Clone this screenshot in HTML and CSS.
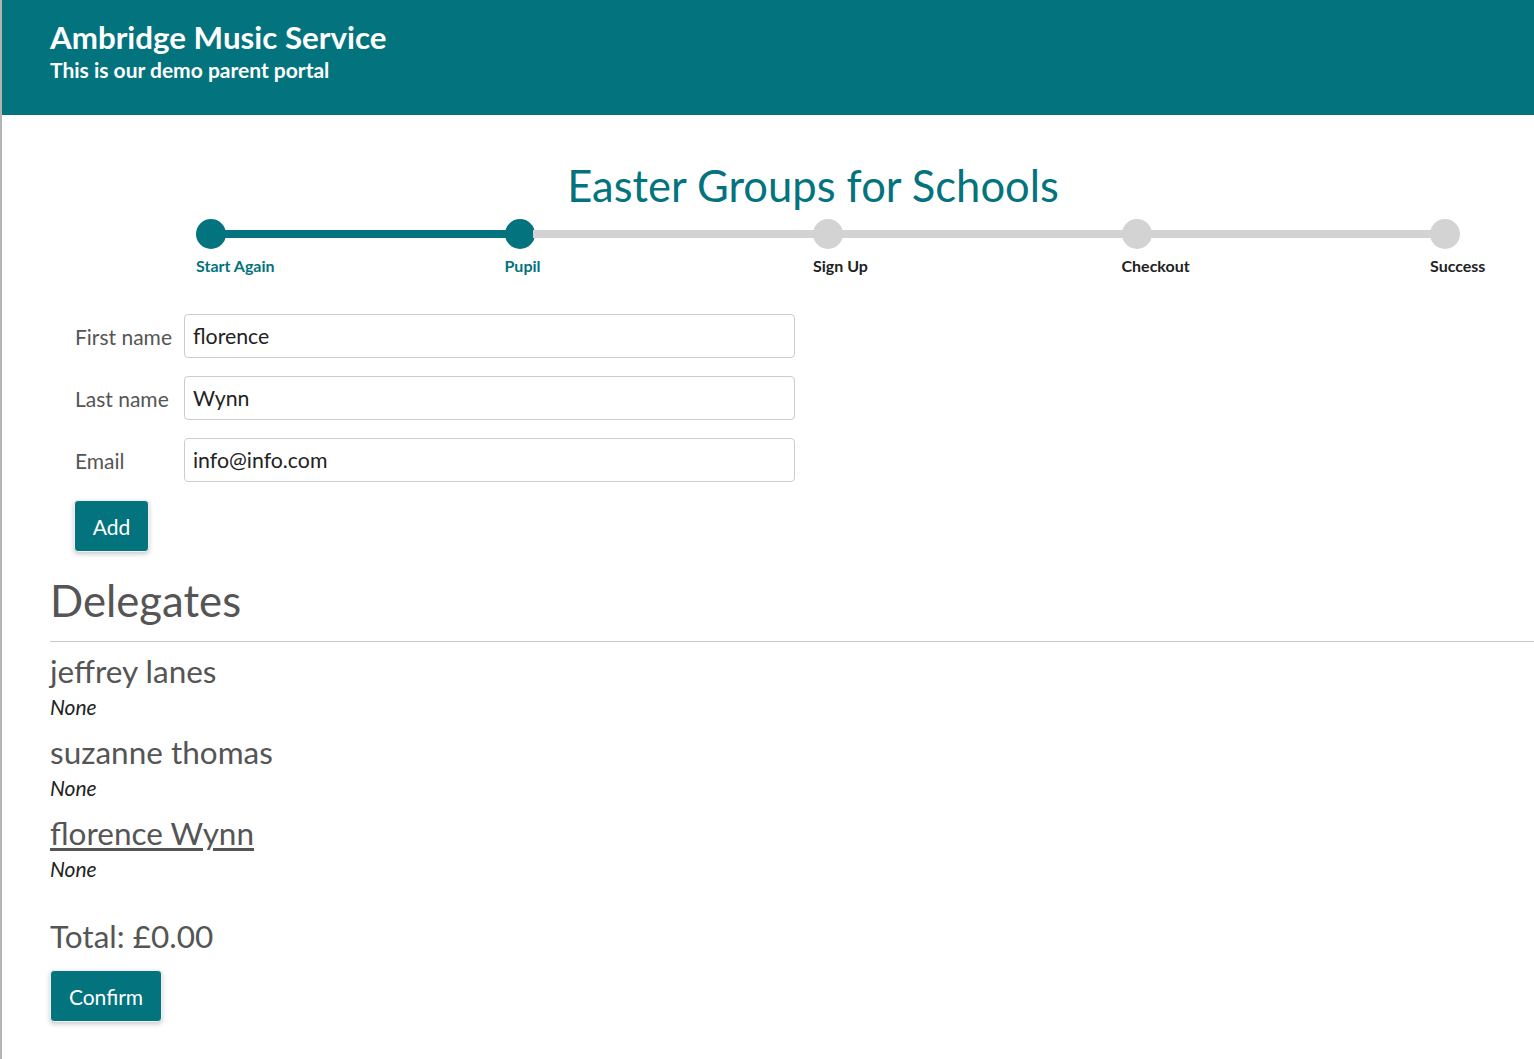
FILE: index.html
```html
<!DOCTYPE html>
<html lang="en">
<head>
<meta charset="utf-8">
<title>Ambridge Music Service</title>
<link rel="stylesheet" href="styles.css">
</head>
<body>
<div class="page">
  <header class="site-header">
    <div class="brand">Ambridge Music Service</div>
    <div class="tagline">This is our demo parent portal</div>
  </header>
  <main class="content">
    <h1 class="event-title">Easter Groups for Schools</h1>
    <div class="stepper">
      <div class="step done"><div class="track"><span class="dot"></span><span class="bar"></span></div><span class="step-label">Start Again</span></div>
      <div class="step current"><div class="track"><span class="dot"></span><span class="bar"></span></div><span class="step-label">Pupil</span></div>
      <div class="step"><div class="track"><span class="dot"></span><span class="bar"></span></div><span class="step-label">Sign Up</span></div>
      <div class="step"><div class="track"><span class="dot"></span><span class="bar"></span></div><span class="step-label">Checkout</span></div>
      <div class="step last"><div class="track"><span class="dot"></span></div><span class="step-label">Success</span></div>
    </div>

    <form class="pupil-form">
      <div class="form-row"><label class="form-label">First name</label><input class="form-input" type="text" value="florence"></div>
      <div class="form-row"><label class="form-label">Last name</label><input class="form-input" type="text" value="Wynn"></div>
      <div class="form-row"><label class="form-label">Email</label><input class="form-input" type="text" value="info@info.com"></div>
      <button type="button" class="btn add-btn">Add</button>
    </form>

    <section class="delegates">
      <h2 class="section-title">Delegates</h2>
      <div class="rule"></div>
      <div class="delegate"><div class="delegate-name">jeffrey lanes</div><div class="delegate-note">None</div></div>
      <div class="delegate"><div class="delegate-name">suzanne thomas</div><div class="delegate-note">None</div></div>
      <div class="delegate"><a class="delegate-name link" href="#">florence Wynn</a><div class="delegate-note">None</div></div>
    </section>

    <div class="total">Total: £0.00</div>
    <button type="button" class="btn confirm-btn">Confirm</button>
  </main>
</div>
</body>
</html>
```

FILE: styles.css
```css
html, body {
  margin: 0;
  padding: 0;
  background: #fff;
}
body {
  font-family: Lato, "Open Sans", sans-serif;
  color: #555;
}
.page {
  border-left: 2px solid #b4b4b4;
  min-height: 1059px;
  box-sizing: border-box;
}
.site-header {
  background: #03737e;
  height: 115px;
  box-sizing: border-box;
  padding: 19px 0 0 48px;
  color: #fff;
}
.brand {
  font-size: 31.3px;
  font-weight: 700;
  line-height: 36px;
}
.tagline {
  font-size: 21px;
  font-weight: 700;
  line-height: 30px;
}
.content {
  padding: 0 0 0 48px;
}
.event-title {
  margin: 0 -42px 0 0;
  padding-top: 43px;
  font-size: 43.5px;
  font-weight: 400;
  line-height: 54px;
  color: #03737e;
  text-align: center;
}
.stepper {
  display: flex;
  margin: 7px 0 0 146px;
}
.step {
  width: 308.5px;
  display: flex;
  flex-direction: column;
}
.step.last {
  width: 60px;
}
.track {
  display: flex;
  align-items: center;
  height: 30px;
}
.dot {
  width: 30px;
  height: 30px;
  border-radius: 50%;
  background: #d3d3d3;
  flex: none;
}
.bar {
  flex: 1;
  height: 8px;
  background: #d3d3d3;
  margin: 0 -2px;
}
.done .dot, .current .dot, .done .bar {
  background: #03737e;
}
.step-label {
  font-size: 16px;
  font-weight: 700;
  color: #222;
  margin-top: 8px;
  line-height: 18px;
  white-space: nowrap;
}
.done .step-label, .current .step-label {
  color: #03737e;
}
.pupil-form {
  margin: 39px 0 0 25px;
  display: flex;
  flex-direction: column;
  gap: 18px;
  align-items: flex-start;
}
.form-row {
  display: flex;
  align-items: center;
}
.form-label {
  width: 109px;
  font-size: 21px;
  color: #555;
}
.form-input {
  width: 611px;
  height: 44px;
  box-sizing: border-box;
  border: 1px solid #ccc;
  border-radius: 4px;
  padding: 0 8px;
  font-family: Lato, "Open Sans", sans-serif;
  font-size: 21.3px;
  color: #222;
  background: #fff;
}
.btn {
  background: #03737e;
  color: #fff;
  border: 1px solid #f0f0f0;
  border-radius: 4px;
  font-family: Lato, "Open Sans", sans-serif;
  font-size: 21px;
  height: 52px;
  padding: 0 17px;
  box-shadow: 0 2px 5px rgba(0,0,0,0.22);
  cursor: pointer;
}
.add-btn {
  width: 75px;
  padding: 0;
  margin-top: 0;
  margin-left: -1px;
}
.delegates {
  margin-top: 23px;
}
.section-title {
  margin: 0;
  font-size: 43.7px;
  font-weight: 400;
  line-height: 50px;
  color: #555;
}
.rule {
  height: 1px;
  background: #c8c8c8;
  margin-top: 16px;
  margin-right: -2px;
}
.delegate {
  display: flex;
  flex-direction: column;
  align-items: flex-start;
  height: 81px;
}
.delegate-name {
  font-size: 31.5px;
  line-height: 40px;
  margin-top: 9px;
  color: #555;
}
.delegate-name.link {
  color: #555;
  text-decoration: underline;
  text-underline-offset: 3px;
}
.delegate-note {
  font-size: 21px;
  font-style: italic;
  color: #222;
  line-height: 24px;
  margin-top: 4px;
}
.total {
  margin-top: 31px;
  font-size: 31.5px;
  line-height: 40px;
  color: #555;
}
.confirm-btn {
  margin-top: 14px;
  width: 112px;
  padding: 0;
}
```
